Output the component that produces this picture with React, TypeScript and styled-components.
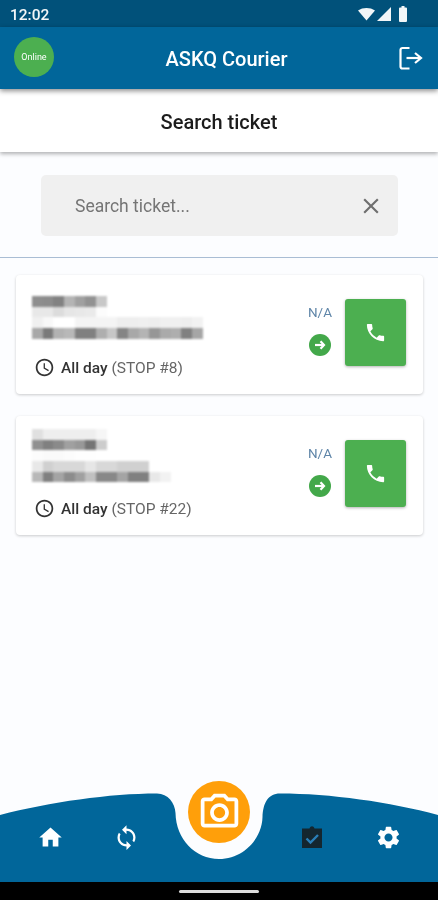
import React from "react";
import styled, { createGlobalStyle } from "styled-components";
import {
  MdAccessTime,
  MdClose,
  MdHome,
  MdOutlinePhotoCamera,
  MdPhone,
  MdSettings,
  MdSync,
} from "react-icons/md";

const GlobalStyle = createGlobalStyle`
  html, body { margin: 0; padding: 0; background: #000; }
  * { box-sizing: border-box; }
  body { font-family: Roboto, "Liberation Sans", sans-serif; }
`;

const Screen = styled.div`
  width: 438px;
  height: 900px;
  display: flex;
  flex-direction: column;
  background: #fcfdff;
  overflow: hidden;
  filter: blur(0.4px);
`;

const StatusBar = styled.div`
  height: 27px;
  flex: none;
  display: flex;
  align-items: center;
  justify-content: space-between;
  padding: 0 30px 0 10px;
  background: #01517a;
  color: #f2f6f8;
  font-size: 15.5px;
  font-weight: 500;
`;

const Clock = styled.span`
  margin-top: 2px;
`;

const AppHeader = styled.header`
  position: relative;
  z-index: 2;
  height: 62px;
  flex: none;
  display: flex;
  align-items: center;
  padding: 0 15px 0 14px;
  background: #01669a;
  box-shadow: 0 2px 5px rgba(0, 0, 0, 0.45);
`;

const OnlineBadge = styled.div`
  width: 40px;
  height: 40px;
  flex: none;
  margin-top: -3px;
  display: flex;
  align-items: center;
  justify-content: center;
  border-radius: 50%;
  background: #4caf50;
  color: #fff;
  font-size: 9px;
`;

const AppTitle = styled.h1`
  flex: 1;
  margin: 2px 0 0;
  text-align: center;
  color: #fff;
  font-size: 20px;
  font-weight: 500;
`;

const SubHeader = styled.div`
  position: relative;
  z-index: 1;
  height: 63px;
  flex: none;
  display: flex;
  align-items: center;
  justify-content: center;
  padding-top: 3px;
  background: #fff;
  box-shadow: 0 2px 4px rgba(0, 0, 0, 0.3);
  color: #1c1c1c;
  font-size: 20px;
  font-weight: 500;
`;

const SearchSection = styled.div`
  flex: none;
  padding: 23px 40px 21px 41px;
  border-bottom: 1.5px solid #a9bdd4;
`;

const SearchBox = styled.div`
  height: 61px;
  display: flex;
  align-items: center;
  padding: 0 14px 0 32px;
  border-radius: 5px;
  background: #f0f0f0;
  color: #6f6f6f;
`;

const SearchInput = styled.input`
  flex: 1;
  min-width: 0;
  border: 0;
  outline: 0;
  background: transparent;
  font-family: inherit;
  font-size: 17.5px;
  &::placeholder {
    color: #757575;
    opacity: 1;
  }
`;

const TicketList = styled.div`
  flex: 1;
  display: flex;
  flex-direction: column;
  gap: 22px;
  padding: 17px 15px 0 16px;
`;

const TicketCard = styled.div`
  height: 119px;
  display: flex;
  padding: 0 17px 0 16px;
  border-radius: 4px;
  background: #fff;
  box-shadow: 0 1px 3px rgba(0, 0, 0, 0.2);
`;

const TicketInfo = styled.div`
  flex: 1;
`;

const Mosaic = styled.div<{ $top: number }>`
  height: 66px;
  padding-top: ${(p) => p.$top}px;
  filter: blur(1px);
`;

const MosaicRow = styled.div`
  display: flex;
  height: 10.67px;
`;

const MosaicCell = styled.span<{ $shade: string }>`
  width: 10.67px;
  height: 100%;
  background: #${(p) => p.$shade.repeat(3)};
`;

const TimeRow = styled.div`
  margin-top: 17px;
  margin-left: 2px;
  display: flex;
  align-items: center;
  gap: 6px;
  height: 19px;
  color: #333;
  font-size: 15.5px;
`;

const TimeLabel = styled.span`
  font-weight: 500;
`;

const StopLabel = styled.span`
  color: #666;
`;

const TicketActions = styled.div`
  display: flex;
  gap: 12px;
  padding-top: 24px;
`;

const StatusColumn = styled.div`
  width: 26px;
  display: flex;
  flex-direction: column;
  align-items: center;
  gap: 14px;
  padding-top: 5px;
`;

const Distance = styled.span`
  height: 16px;
  line-height: 16px;
  color: #5f85a8;
  font-size: 13.5px;
`;

const GoBadge = styled.span`
  width: 22px;
  height: 22px;
  display: flex;
  align-items: center;
  justify-content: center;
  border-radius: 50%;
  background: #43a84a;
`;

const CallButton = styled.button`
  width: 61px;
  height: 67px;
  display: flex;
  align-items: center;
  justify-content: center;
  padding: 0;
  border: 0;
  border-radius: 3px;
  background: #4caf50;
  box-shadow: 0 1px 3px rgba(0, 0, 0, 0.3);
  color: #fff;
`;

const BottomNav = styled.nav`
  position: relative;
  height: 101px;
  flex: none;
`;

const NavCurve = styled.svg`
  position: absolute;
  inset: 0;
`;

const NavRow = styled.div`
  position: relative;
  display: grid;
  grid-template-columns: 76px 76px 110px 76px 76px;
  padding: 43px 0 0 12px;
`;

const NavItem = styled.div`
  height: 26px;
  display: flex;
  align-items: center;
  justify-content: center;
  color: #fff;
`;

const CameraButton = styled.button`
  position: absolute;
  top: 0;
  left: 188px;
  width: 62px;
  height: 62px;
  display: flex;
  align-items: center;
  justify-content: center;
  padding: 0;
  border: 0;
  border-radius: 50%;
  background: #ff9f0a;
  color: #fff;
`;

const GestureBar = styled.div`
  height: 18px;
  flex: none;
  display: flex;
  align-items: center;
  justify-content: center;
  background: #000;
`;

const GestureHandle = styled.span`
  width: 80px;
  height: 3px;
  border-radius: 2px;
  background: #ddd;
`;

const StatusIcons = () => (
  <svg width="50" height="16" viewBox="0 0 50 16" fill="#f2f6f8">
    <path d="M0 4.500C2.500 2.800 5.500 2 8.500 2s6 .8 8.500 2.500L8.500 14.500z" />
    <path d="M33 1v14H19z" />
    <path d="M41 2.500a1 1 0 0 1 1-1h1.500V0h3v1.500H48a1 1 0 0 1 1 1V15a1 1 0 0 1-1 1h-6a1 1 0 0 1-1-1z" />
  </svg>
);

const LogoutIcon = () => (
  <svg width="24" height="24" viewBox="0 0 24 24" fill="none" stroke="#fff" strokeWidth="2.2">
    <path d="M10.500 2H3.500a2 2 0 0 0-2 2v16.500a2 2 0 0 0 2 2h7" />
    <path d="M7.500 12H21" />
    <path d="M16 7l6 5-6 5" />
  </svg>
);

const GoArrow = () => (
  <svg width="12" height="12" viewBox="0 0 12 12" fill="none" stroke="#fff" strokeWidth="2.200">
    <path d="M1 6h9" />
    <path d="M6.500 2.200L10 6l-3.500 3.800" />
  </svg>
);

const ClipboardIcon = () => (
  <svg width="20" height="22" viewBox="0 0 20 22">
    <path fill="#14262f" d="M0 2.500h7.500C8 1 9 .2 10 .2s2 .8 2.500 2.300H20V22H0z" />
    <path fill="none" stroke="#2a7fb8" strokeWidth="2.400" d="M4.500 12.500l4 4L16 9" />
  </svg>
);

const tickets = [
  {
    stop: 8,
    top: 21,
    rows: [
      ["8e", "8c", "82", "b4", "a0", "92", "c8"],
      ["e8", "e8", "dc", "e6", "e8", "ea", "fc"],
      ["f0", "f8", "ff", "ff", "f4", "f4", "f4", "f4", "ee", "ee", "f0", "ee", "f0", "f0", "ee", "f2"],
      ["a8", "7a", "b2", "b8", "80", "80", "ae", "c6", "84", "a8", "b4", "96", "aa", "ae", "80", "a6"],
    ],
  },
  {
    stop: 22,
    top: 13,
    rows: [
      ["e0", "ee", "ee", "ee", "ee", "ee", "f6"],
      ["90", "80", "8a", "a0", "98", "74", "cc"],
      ["fc", "fa", "fa", "fc", "fe", "fe"],
      ["e8", "d0", "d8", "d8", "d8", "e6", "d8", "d8", "d0", "d0", "d0"],
      ["b8", "80", "a4", "8c", "a0", "c0", "88", "88", "a4", "80", "80", "e8", "f2"],
    ],
  },
];

export default function App() {
  return (
    <Screen>
      <GlobalStyle />
      <StatusBar>
        <Clock>12:02</Clock>
        <StatusIcons />
      </StatusBar>
      <AppHeader>
        <OnlineBadge>Online</OnlineBadge>
        <AppTitle>ASKQ Courier</AppTitle>
        <LogoutIcon />
      </AppHeader>
      <SubHeader>Search ticket</SubHeader>
      <SearchSection>
        <SearchBox>
          <SearchInput placeholder="Search ticket..." readOnly />
          <MdClose size={26} />
        </SearchBox>
      </SearchSection>
      <TicketList>
        {tickets.map((ticket) => (
          <TicketCard key={ticket.stop}>
            <TicketInfo>
              <Mosaic $top={ticket.top}>
                {ticket.rows.map((row, r) => (
                  <MosaicRow key={r}>
                    {row.map((shade, c) => (
                      <MosaicCell key={c} $shade={shade} />
                    ))}
                  </MosaicRow>
                ))}
              </Mosaic>
              <TimeRow>
                <MdAccessTime size={21} />
                <span>
                  <TimeLabel>All day</TimeLabel>{" "}
                  <StopLabel>(STOP #{ticket.stop})</StopLabel>
                </span>
              </TimeRow>
            </TicketInfo>
            <TicketActions>
              <StatusColumn>
                <Distance>N/A</Distance>
                <GoBadge>
                  <GoArrow />
                </GoBadge>
              </StatusColumn>
              <CallButton>
                <MdPhone size={23} />
              </CallButton>
            </TicketActions>
          </TicketCard>
        ))}
      </TicketList>
      <BottomNav>
        <NavCurve width="438" height="101" viewBox="0 0 438 101">
          <path
            fill="#01669a"
            d="M0 34C50 21 110 12.500 157 12.500C168 12.500 175 22 175.500 32C176 58 195 78 219 78C243 78 262 58 262.500 36C263 22 268 12.500 280 12.500C330 12.500 390 21 438 34V101H0Z"
          />
        </NavCurve>
        <NavRow>
          <NavItem>
            <MdHome size={27} />
          </NavItem>
          <NavItem>
            <MdSync size={27} />
          </NavItem>
          <span />
          <NavItem>
            <ClipboardIcon />
          </NavItem>
          <NavItem>
            <MdSettings size={27} />
          </NavItem>
        </NavRow>
        <CameraButton>
          <MdOutlinePhotoCamera size={45} />
        </CameraButton>
      </BottomNav>
      <GestureBar>
        <GestureHandle />
      </GestureBar>
    </Screen>
  );
}
